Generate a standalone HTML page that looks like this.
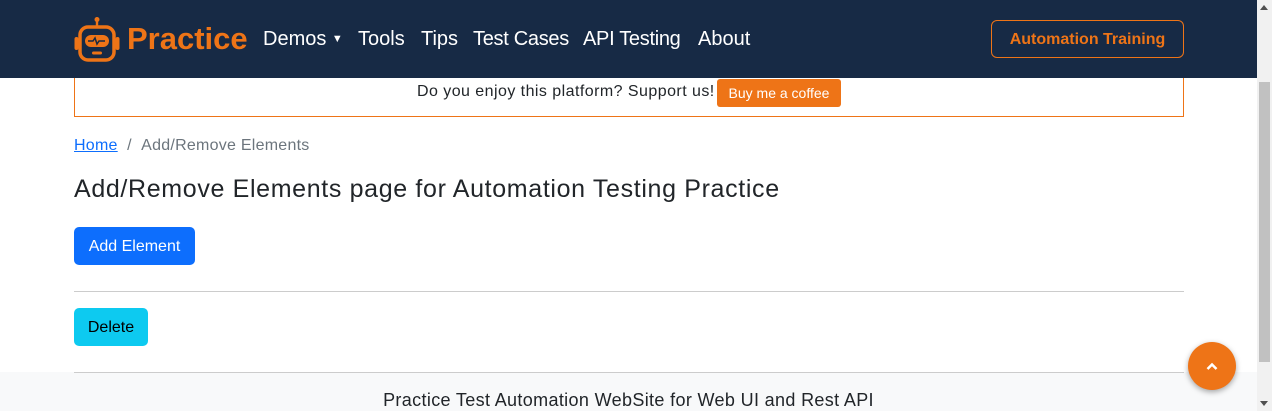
<!DOCTYPE html>
<html><head><meta charset="utf-8"><style>
*{box-sizing:border-box;margin:0;padding:0}
body{width:1272px;height:411px;overflow:hidden;position:relative;background:#fff;font-family:"Liberation Sans",sans-serif;color:#212529}
.nav{position:absolute;left:0;top:0;width:1257px;height:78px;background:#172a45}
.abs{position:absolute;white-space:nowrap}
.ni{color:#fff;font-size:20px;top:28px}
.sb{position:absolute;left:1257px;top:0;width:15px;height:411px;background:#f1f1f1}
</style></head><body>
<div class="nav">
<svg class="abs" style="left:73px;top:16px" width="48" height="46" viewBox="0 0 48 46">
<circle cx="24" cy="3.5" r="2.5" fill="#ee7417"/><rect x="22.8" y="4" width="2.4" height="7" fill="#ee7417"/>
<rect x="7" y="11" width="34" height="33" rx="8" fill="none" stroke="#ee7417" stroke-width="3.5"/>
<rect x="1.5" y="21" width="4" height="13" rx="2" fill="#ee7417"/><rect x="42.5" y="21" width="4" height="13" rx="2" fill="#ee7417"/>
<rect x="12" y="19" width="24" height="12" rx="6" fill="#ee7417"/>
<path d="M15 25h5l2-3 2 6 2-3h6" fill="none" stroke="#172a45" stroke-width="1.5"/>
<rect x="19" y="35.5" width="10" height="3" rx="1.5" fill="#ee7417"/>
</svg>
<div class="abs" style="left:127px;top:21px;color:#ee7417;font-size:31px;font-weight:bold">Practice</div>
<div class="abs ni" style="left:263px">Demos <span style="font-size:11px;vertical-align:3px">▼</span></div>
<div class="abs ni" style="left:358px">Tools</div>
<div class="abs ni" style="left:421px">Tips</div>
<div class="abs ni" style="left:473px;letter-spacing:-0.3px">Test Cases</div>
<div class="abs ni" style="left:583px;letter-spacing:-0.3px">API Testing</div>
<div class="abs ni" style="left:698px">About</div>
<div class="abs" style="left:991px;top:20px;width:193px;height:38px;border:1px solid #ee7417;border-radius:6px;color:#ee7417;font-weight:bold;font-size:16px;text-align:center;line-height:38px">Automation Training</div>
</div>
<div class="abs" style="left:74px;top:78px;width:1110px;height:39px;border:1px solid #ee7417;border-top:none"></div>
<div class="abs" style="left:417px;top:83px;font-size:16px;letter-spacing:0.45px">Do you enjoy this platform? Support us!</div>
<div class="abs" style="left:717px;top:79px;width:124px;height:28px;background:#ee7417;border-radius:3px;color:#fff;font-size:14px;text-align:center;line-height:29px">Buy me a coffee</div>
<div class="abs" style="left:74px;top:137px;font-size:16px;color:#6c757d;letter-spacing:0.25px"><span style="color:#0d6efd;text-decoration:underline">Home</span>&nbsp; / &nbsp;Add/Remove Elements</div>
<div class="abs" style="left:74px;top:175px;font-size:25px;letter-spacing:0.65px">Add/Remove Elements page for Automation Testing Practice</div>
<div class="abs" style="left:74px;top:227px;width:121px;height:38px;background:#0d6efd;border-radius:5px;color:#fff;font-size:16px;text-align:center;line-height:40px">Add Element</div>
<div class="abs" style="left:74px;top:291px;width:1110px;height:1px;background:#ccc"></div>
<div class="abs" style="left:74px;top:308px;width:74px;height:38px;background:#0dcaf0;border-radius:5px;color:#000;font-size:16px;text-align:center;line-height:40px">Delete</div>
<div class="abs" style="left:0;top:372px;width:1257px;height:39px;background:#f8f9fa"></div>
<div class="abs" style="left:74px;top:372px;width:1110px;height:1px;background:#ccc"></div>
<div class="abs" style="left:0;top:390px;width:1257px;text-align:center;font-size:18px;letter-spacing:0.35px">Practice Test Automation WebSite for Web UI and Rest API</div>
<div class="abs" style="left:1188px;top:342px;width:48px;height:48px;border-radius:50%;background:#ee7417;box-shadow:0 2px 6px rgba(0,0,0,.35)"><svg width="48" height="48"><path d="M19.5 27l4.5-4.5 4.5 4.5" fill="none" stroke="#fff" stroke-width="2.5"/></svg></div>
<div class="sb"><div style="position:absolute;left:2px;top:82px;width:11px;height:280px;background:#c1c1c1"></div>
<div style="position:absolute;left:3px;top:5px;border:4px solid transparent;border-bottom:5px solid #505050;border-top:none"></div>
<div style="position:absolute;left:3px;top:401px;border:4px solid transparent;border-top:5px solid #505050;border-bottom:none"></div></div>
</body></html>
